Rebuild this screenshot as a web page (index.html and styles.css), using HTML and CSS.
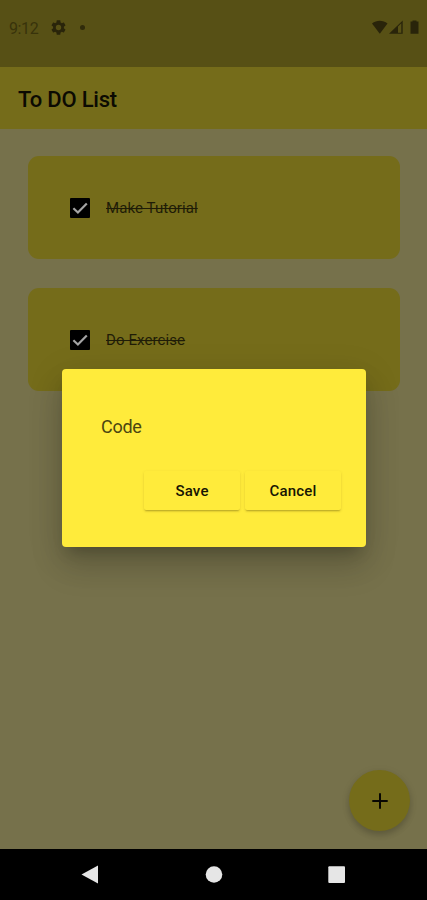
FILE: index.html
```html
<!DOCTYPE html>
<html lang="en">
<head>
<meta charset="utf-8">
<title>To DO List</title>
<link rel="stylesheet" href="styles.css">
</head>
<body>
<div class="phone">
  <header class="status">
    <span class="time">9:12</span>
    <svg class="gear" width="15" height="15" viewBox="2 2 20 20"><path d="M19.14 12.94c.04-.3.06-.61.06-.94 0-.32-.02-.64-.07-.94l2.03-1.58c.18-.14.23-.41.12-.61l-1.92-3.32c-.12-.22-.37-.29-.59-.22l-2.39.96c-.5-.38-1.03-.7-1.62-.94l-.36-2.54c-.04-.24-.24-.41-.48-.41h-3.84c-.24 0-.43.17-.47.41l-.36 2.54c-.59.24-1.13.57-1.62.94l-2.39-.96c-.22-.08-.47 0-.59.22L2.74 8.87c-.12.21-.08.47.12.61l2.03 1.58c-.05.3-.09.63-.09.94s.02.64.07.94l-2.03 1.58c-.18.14-.23.41-.12.61l1.92 3.32c.12.22.37.29.59.22l2.39-.96c.5.38 1.03.7 1.62.94l.36 2.54c.05.24.24.41.48.41h3.84c.24 0 .44-.17.47-.41l.36-2.54c.59-.24 1.13-.56 1.62-.94l2.39.96c.22.08.47 0 .59-.22l1.92-3.32c.12-.22.07-.47-.12-.61l-2.01-1.58zM12 15.6A3.6 3.6 0 1 1 12 8.4a3.6 3.6 0 0 1 0 7.2z"/></svg>
    <span class="dot"></span>
    <svg class="signals" width="48" height="15" viewBox="0 0 48 15">
      <path d="M0 3.600C4.500-.2 11-.2 15.500 3.600L7.800 13.800z"/>
      <path d="M17 13.800L30.700 .5v13.300zM26 6.500v6.200h3.300V3.200z" fill-rule="evenodd"/>
      <path d="M38.500 1.600h2V.4h4v1.200h2v12.200h-8z"/>
    </svg>
  </header>
  <div class="appbar"><h1>To DO List</h1></div>
  <main class="content">
    <section class="card">
      <svg class="check" width="20" height="20" viewBox="0 0 20 20"><rect width="20" height="20" rx="1"/><path d="M3.400 10.200l4.500 4.300 8.900-9"/></svg>
      <span class="task">Make Tutorial</span>
    </section>
    <section class="card">
      <svg class="check" width="20" height="20" viewBox="0 0 20 20"><rect width="20" height="20" rx="1"/><path d="M3.400 10.200l4.500 4.300 8.900-9"/></svg>
      <span class="task">Do Exercise</span>
    </section>
    <button class="fab" aria-label="Add"><svg width="16" height="16" viewBox="0 0 16 16"><path d="M8 .3v15.400M.3 8h15.400"/></svg></button>
  </main>
  <nav class="nav">
    <svg width="427" height="51" viewBox="0 0 427 51"><path d="M81.500 25.500L98 16.500v18z"/><circle cx="214" cy="25.500" r="8.300"/><rect x="328.300" y="17.300" width="16.700" height="16.700" rx="1"/></svg>
  </nav>
  <div class="dialog" role="dialog">
    <div class="field">Code</div>
    <div class="actions"><button>Save</button><button>Cancel</button></div>
  </div>
</div>
</body>
</html>
```
FILE: styles.css
```css
* { box-sizing: border-box; }
body { margin: 0; font-family: Roboto, sans-serif; }
button { border: 0; padding: 0; font-family: inherit; }
svg { display: block; }
.phone {
  position: relative;
  width: 427px;
  height: 900px;
  display: flex;
  flex-direction: column;
  overflow: hidden;
  background: #76714b;
}
.status {
  height: 67px;
  padding: 0 7px 13px 9px;
  display: flex;
  align-items: center;
  background: #575015;
  fill: #29240a;
}
.time { width: 42px; font-size: 16px; letter-spacing: -.4px; color: #38330b; padding-top: 2px; }
.dot { width: 5px; height: 5px; border-radius: 50%; background: #302b0b; margin-left: 14px; }
.signals { margin-left: auto; }
.appbar {
  height: 62px;
  padding-left: 18px;
  display: flex;
  align-items: center;
  background: #756c1a;
}
h1 { margin: 3px 0 0; font-size: 22px; font-weight: 500; line-height: 26px; color: #0b0a02; letter-spacing: -.2px; }
.content {
  flex: 1;
  position: relative;
  padding: 27px 27px 0 28px;
  display: flex;
  flex-direction: column;
  gap: 29px;
}
.card {
  height: 103px;
  padding-left: 42px;
  display: flex;
  align-items: center;
  gap: 16px;
  border-radius: 11px;
  background: #756c1a;
}
.check rect { fill: #000; }
.check path { fill: none; stroke: #a5a5a5; stroke-width: 2.200; }
.task { font-size: 15px; letter-spacing: .1px; color: #1f1c07; text-decoration: line-through; text-decoration-thickness: 1px; }
.fab {
  position: absolute;
  right: 17px;
  bottom: 18px;
  width: 61px;
  height: 61px;
  border-radius: 50%;
  display: grid;
  place-items: center;
  background: #756c1a;
  box-shadow: 0 4px 6px rgba(0,0,0,.16), 0 2px 10px rgba(0,0,0,.08);
}
.fab path { stroke: #080702; stroke-width: 2; }
.nav { height: 51px; background: #000; fill: #e6e6e6; }
.dialog {
  position: absolute;
  left: 62px;
  top: 369px;
  width: 304px;
  height: 178px;
  padding: 46px 25px 37px 39px;
  display: flex;
  flex-direction: column;
  justify-content: space-between;
  border-radius: 4px;
  background: #ffeb3b;
  box-shadow: 0 10px 14px -6px rgba(0,0,0,.2), 0 20px 32px 1px rgba(0,0,0,.14), 0 8px 36px 4px rgba(0,0,0,.08);
}
.field { font-size: 18px; line-height: 23px; letter-spacing: -.3px; color: #4b4511; }
.actions { display: flex; justify-content: flex-end; gap: 5px; }
.actions button {
  width: 96px;
  height: 39px;
  border-radius: 2px;
  background: #ffeb3b;
  box-shadow: 0 2px 2px -1px rgba(70,60,0,.34), 0 1px 3px rgba(70,60,0,.12);
  font-size: 15px;
  font-weight: 500;
  letter-spacing: .2px;
  color: #171503;
}
```
